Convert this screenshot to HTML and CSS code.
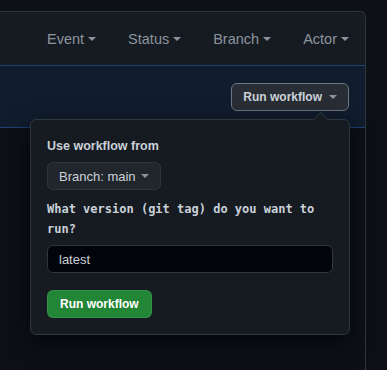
FILE: index.html
```html
<!DOCTYPE html>
<html lang="en">
<head>
  <meta charset="UTF-8">
  <meta name="viewport" content="width=device-width, initial-scale=1.0">
  <title>Workflow runs</title>
  <link rel="stylesheet" href="styles.css">
</head>
<body>
  <div class="box">
      <div class="box-header">
          <span class="filter">Event<span class="caret"></span></span>
          <span class="filter">Status<span class="caret"></span></span>
          <span class="filter">Branch<span class="caret"></span></span>
          <span class="filter">Actor<span class="caret"></span></span>
      </div>

      <div class="run-row">
          <button class="btn btn-open">Run workflow<span class="caret"></span></button>

          <!-- Dropdown opened from the Run workflow button -->
          <div class="popover">
              <div class="popover-title">Use workflow from</div>
              <button class="btn btn-branch">Branch: main<span class="caret"></span></button>
              <label class="input-label" for="version">What version (git tag) do you want to run?</label>
              <input id="version" class="input" type="text" value="latest">
              <button class="btn btn-primary">Run workflow</button>
          </div>
      </div>
  </div>
</body>
</html>
```

FILE: styles.css
```css
:root {
    --bg: #0d1117;
    --bg-header: #161b22;
    --border: #30363d;
    --text: #c9d1d9;
    --muted: #8b949e;
    --blue-bg: #111d2e;
    --blue-border: #1e4273;
}

body {
    margin: 0;
    padding-top: 11px;
    height: 359px;
    overflow: hidden;
    background: var(--bg);
    color: var(--text);
    font-family: 'Liberation Sans', Arial, sans-serif;
}

.box {
    width: 365px;
    height: 358px;
    border: 1px solid var(--border);
    border-left: none;
    border-bottom: none;
    border-radius: 0 6px 0 0;
    background: var(--bg);
}

.box-header {
    height: 53px;
    display: flex;
    justify-content: flex-end;
    align-items: center;
    gap: 32px;
    padding-right: 16px;
    background: var(--bg-header);
    border-radius: 0 6px 0 0;
}

.filter {
    display: flex;
    align-items: center;
    font-size: 14.5px;
    color: var(--muted);
}

.caret {
    display: inline-block;
    width: 0;
    height: 0;
    margin-left: 4px;
    border-top: 4px solid currentColor;
    border-left: 4px solid transparent;
    border-right: 4px solid transparent;
}

.run-row {
    position: relative;
    height: 61px;
    display: flex;
    justify-content: flex-end;
    align-items: center;
    padding-right: 16px;
    background: var(--blue-bg);
    border-top: 1px solid var(--blue-border);
    border-bottom: 1px solid var(--blue-border);
}

.btn {
    display: inline-flex;
    align-items: center;
    height: 28px;
    padding: 0 11px;
    font-family: inherit;
    font-size: 12px;
    font-weight: bold;
    color: var(--text);
    background: #21262d;
    border: 1px solid var(--border);
    border-radius: 6px;
}

.btn-open {
    background: #292e36;
    border-color: #6e7681;
}

.btn-open .caret {
    margin-left: 7px;
    color: var(--muted);
}

/* Dropdown panel */
.popover {
    position: absolute;
    top: 53px;
    left: 30px;
    width: 286px;
    display: flex;
    flex-direction: column;
    align-items: flex-start;
    padding: 16px;
    background: var(--bg-header);
    border: 1px solid var(--border);
    border-radius: 6px;
    box-shadow: 0 8px 24px rgba(1, 4, 9, 0.85);
    z-index: 10;
}

.popover::before,
.popover::after {
    content: '';
    position: absolute;
    left: 282px;
    border: 8px solid transparent;
}

.popover::before {
    top: -16px;
    border-bottom-color: var(--border);
}

.popover::after {
    top: -15px;
    border-bottom-color: var(--bg-header);
}

.popover-title {
    font-size: 12.5px;
    font-weight: bold;
    line-height: 18px;
    margin-top: 1px;
}

.btn-branch {
    margin-top: 7px;
    font-size: 13px;
    font-weight: normal;
}

.btn-branch .caret {
    margin-left: 5px;
    color: var(--muted);
}

.input-label {
    margin-top: 9px;
    font-family: 'DejaVu Sans Mono', 'Liberation Mono', monospace;
    font-size: 12px;
    font-weight: bold;
    line-height: 20px;
}

.input {
    box-sizing: border-box;
    width: 100%;
    height: 28px;
    margin-top: 6px;
    padding: 0 11px;
    font-family: inherit;
    font-size: 13px;
    color: var(--text);
    background: #010409;
    border: 1px solid var(--border);
    border-radius: 6px;
    outline: none;
}

.btn-primary {
    margin-top: 17px;
    padding: 0 12px;
    color: #fff;
    background: #238636;
    border-color: rgba(240, 246, 252, 0.1);
}
```
